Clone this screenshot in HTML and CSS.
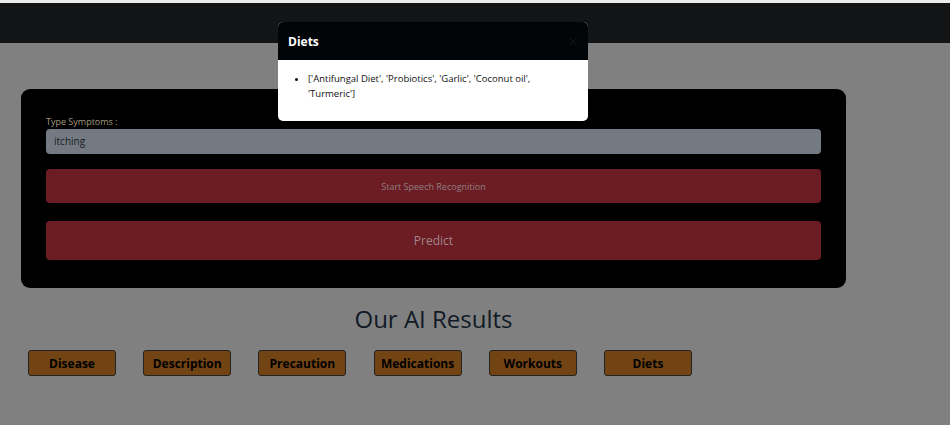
FILE: index.html
```html
<!DOCTYPE html>
<html lang="en">
<head>
<meta charset="utf-8">
<title>Health Predictor</title>
<link rel="stylesheet" href="styles.css">
</head>
<body>
<div class="topline"></div>
<nav class="navbar"></nav>
<main class="container">
  <section class="card">
    <label class="label" for="symptoms">Type Symptoms :</label>
    <div class="input" id="symptoms">itching</div>
    <button class="btn speech">Start Speech Recognition</button>
    <button class="btn predict">Predict</button>
  </section>
  <h1 class="title">Our AI Results</h1>
  <div class="results">
    <button class="tag">Disease</button>
    <button class="tag">Description</button>
    <button class="tag">Precaution</button>
    <button class="tag">Medications</button>
    <button class="tag">Workouts</button>
    <button class="tag">Diets</button>
  </div>
</main>
<div class="modal">
  <div class="modal-header">
    <span class="modal-title">Diets</span>
    <span class="close">&times;</span>
  </div>
  <div class="modal-body">
    <ul>
      <li>['Antifungal Diet', 'Probiotics', 'Garlic', 'Coconut oil', 'Turmeric']</li>
    </ul>
  </div>
</div>
</body>
</html>
```
FILE: styles.css
```css
* { box-sizing: border-box; }
html, body { margin: 0; padding: 0; }
body {
  background: #808080;
  font-family: "Open Sans", "Noto Sans", sans-serif;
  height: 425px;
  overflow: hidden;
  position: relative;
}
.topline { height: 3px; background: #ececec; }
.navbar { height: 40px; background: #131416; }
.container { width: 825px; margin-left: 21px; }
.card {
  margin-top: 46px;
  background: #000;
  border-radius: 9px;
  padding: 26px 25px 28px 25px;
  display: flex;
  flex-direction: column;
}
.label {
  font-size: 9px;
  color: #a39a80;
  line-height: 14px;
}
.input {
  height: 25px;
  background: #747a82;
  border-radius: 4px;
  font-size: 10px;
  color: #1b1c1f;
  line-height: 25px;
  padding-left: 8px;
}
.btn {
  border: none;
  background: #6c1c23;
  border-radius: 4px;
  font-family: inherit;
  width: 100%;
  padding: 0;
}
.speech {
  margin-top: 15px;
  height: 34px;
  font-size: 9px;
  color: #8f7f82;
}
.predict {
  margin-top: 18px;
  height: 39px;
  font-size: 12px;
  color: #a0878c;
}
.title {
  margin: 14px 0 0;
  text-align: center;
  font-size: 24px;
  font-weight: 500;
  color: #111a27;
  line-height: 34px;
}
.results {
  display: flex;
  gap: 27.2px;
  margin-top: 14px;
  padding-left: 7px;
}
.tag {
  width: 88px;
  height: 26px;
  background: #734413;
  border: 1px solid #222;
  border-radius: 3px;
  font-family: inherit;
  font-weight: 700;
  font-size: 12px;
  color: #000;
  padding: 0;
}
.modal {
  position: absolute;
  left: 278px;
  top: 22px;
  width: 310px;
  background: #fff;
  border-radius: 5px;
  overflow: hidden;
}
.modal-header {
  height: 38px;
  background: #020507;
  display: flex;
  align-items: center;
  justify-content: space-between;
  padding: 0 10px;
}
.modal-title {
  color: #fff;
  font-weight: 700;
  font-size: 12px;
}
.close {
  color: #0e1114;
  font-size: 18px;
}
.modal-body {
  padding: 11px 40px 20px 10px;
  font-size: 9.5px;
  color: #111;
  line-height: 15px;
}
.modal-body ul { margin: 0; padding-left: 20px; }
```
